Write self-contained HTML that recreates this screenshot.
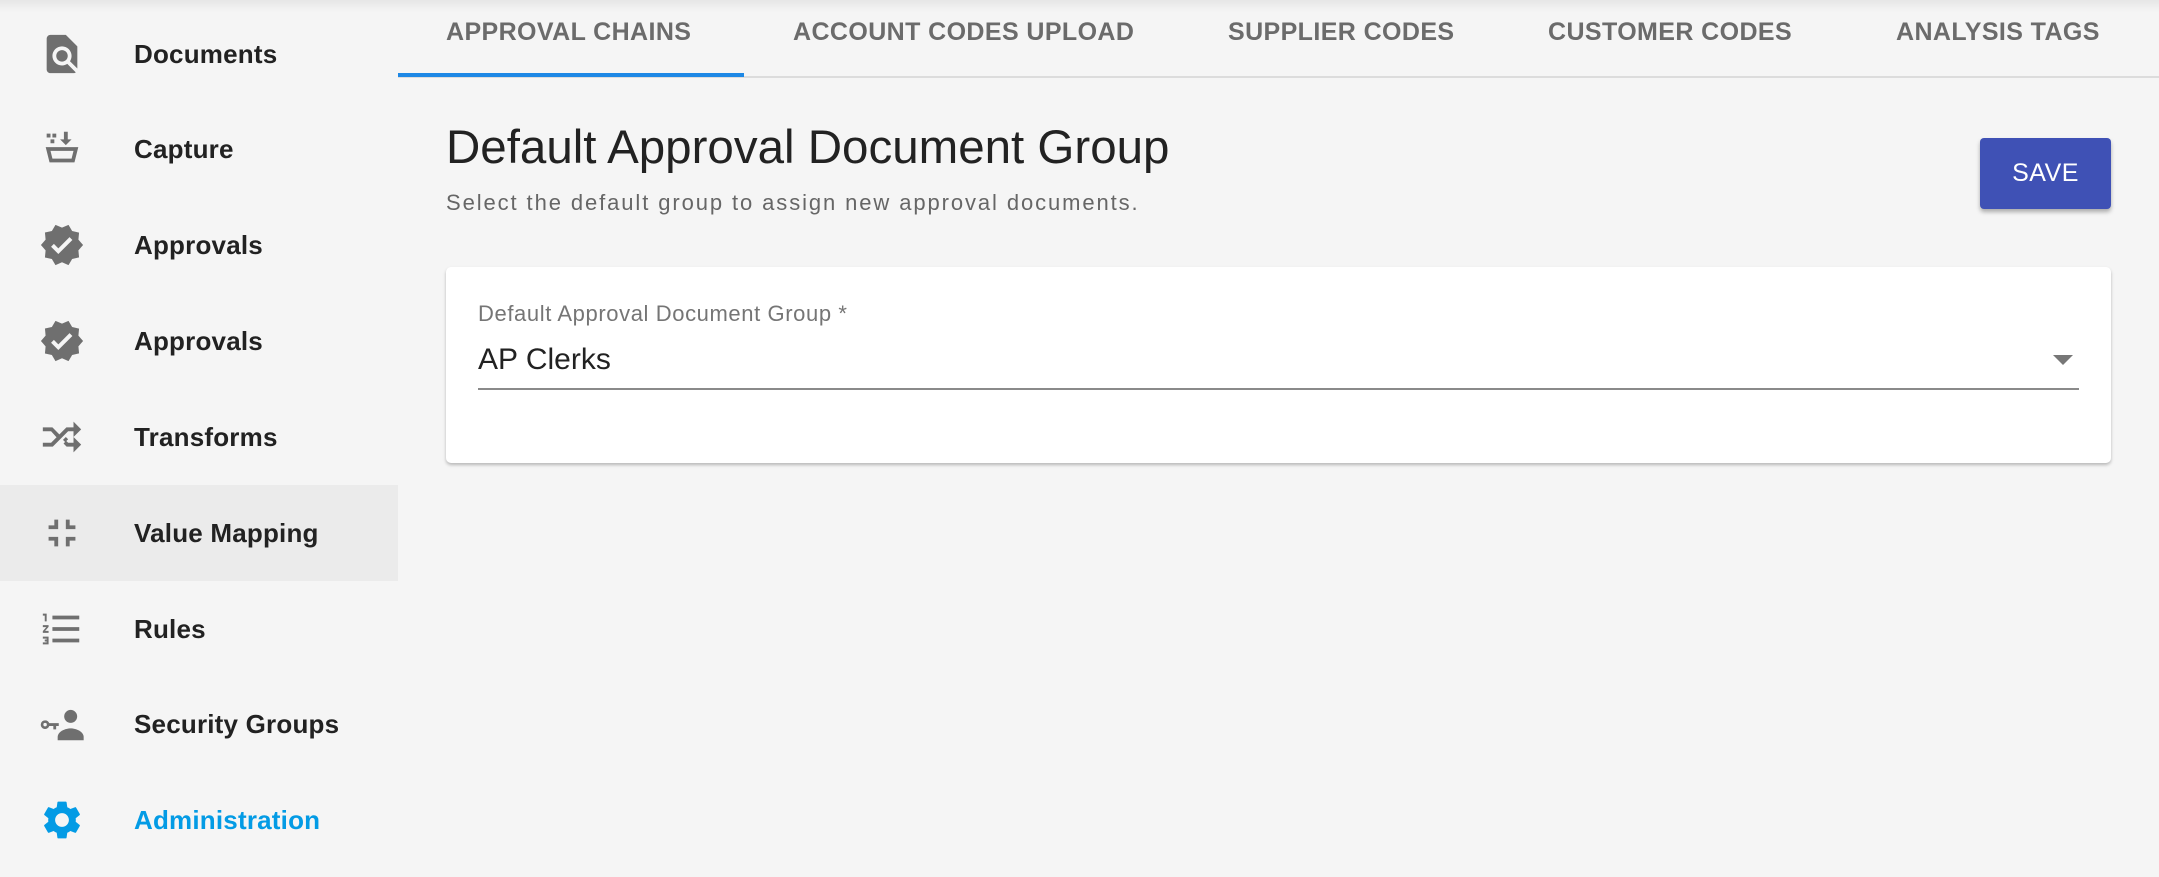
<!DOCTYPE html>
<html><head><meta charset="utf-8"><style>
*{margin:0;padding:0;box-sizing:border-box}
body{width:2159px;height:877px;background:#f5f5f5;font-family:"Liberation Sans",sans-serif;position:relative;overflow:hidden}
.top{position:absolute;left:0;top:0;width:2159px;height:12px;background:linear-gradient(#e6e6e6,#f5f5f5)}
.item{position:absolute;left:0;width:398px;height:96px}
.item svg{position:absolute;left:39px;top:25px;width:46px;height:46px;fill:#6f6f6f}
.item span{position:absolute;left:134px;top:0;line-height:96px;font-size:26px;font-weight:bold;color:#222;letter-spacing:0.2px}
.tab{position:absolute;top:18px;font-size:25px;color:#6b6b6b;font-weight:bold;letter-spacing:0.4px}
</style></head><body>
<div class="top"></div>
<div class="item" style="top:6px"><svg viewBox="0 0 24 24"><path d="M20 19.59V8l-6-6H6c-1.1 0-1.99.9-1.99 2L4 20c0 1.1.89 2 1.99 2H18c.45 0 .85-.15 1.19-.4l-4.430-4.43c-.8.52-1.74.83-2.76.83-2.76 0-5-2.24-5-5s2.24-5 5-5 5 2.24 5 5c0 1.02-.31 1.96-.83 2.77L20 19.59zM9 13c0 1.66 1.34 3 3 3s3-1.34 3-3-1.34-3-3-3-3 1.34-3 3z"/></svg><span>Documents</span></div>
<div class="item" style="top:101px"><svg viewBox="0 0 24 24"><path d="M4 4h2v2H4zM7 4h2v2H7zM6 7h2v2H6zM13 3h2v4h2l-3 3-3-3h2z"/><path d="M3.5 11h17l-2 8h-13zM6 13l1 4h10l1-4z" fill-rule="evenodd"/></svg><span>Capture</span></div>
<div class="item" style="top:197px"><svg viewBox="0 0 24 24"><path d="M23 12l-2.44-2.79.34-3.69-3.61-.82-1.89-3.2L12 2.96 8.6 1.5 6.71 4.69 3.1 5.5l.34 3.7L1 12l2.44 2.79-.34 3.7 3.61.82L8.6 22.5l3.4-1.47 3.4 1.46 1.89-3.19 3.61-.82-.34-3.69L23 12zm-12.91 4.72l-3.8-3.81 1.48-1.48 2.32 2.33 5.85-5.87 1.48 1.48-7.33 7.35z"/></svg><span>Approvals</span></div>
<div class="item" style="top:293px"><svg viewBox="0 0 24 24"><path d="M23 12l-2.44-2.79.34-3.69-3.61-.82-1.89-3.2L12 2.96 8.6 1.5 6.71 4.69 3.1 5.5l.34 3.7L1 12l2.44 2.79-.34 3.7 3.61.82L8.6 22.5l3.4-1.47 3.4 1.46 1.89-3.19 3.61-.82-.34-3.69L23 12zm-12.91 4.72l-3.8-3.81 1.48-1.48 2.32 2.33 5.85-5.87 1.48 1.48-7.33 7.35z"/></svg><span>Approvals</span></div>
<div class="item" style="top:389px"><svg viewBox="0 0 24 24"><path d="M2 7h5l4 4-1.5 1.5L6.3 9H2zM2 15h4.3l8-8H18V4l4 4-4 4V9h-2.8l-8 8H2zM12.5 13.5L14 12l1.2 1.2-1.5 1.5zM15.2 15H18v-3l4 4-4 4v-3h-3.6l-1.6-1.6 1.4-1.4z"/></svg><span>Transforms</span></div>
<div class="item" style="top:485px;background:#ebebeb"><svg viewBox="0 0 24 24"><path d="M5 16h3v3h2v-5H5v2zm3-8H5v2h5V5H8v3zm6 11h2v-3h3v-2h-5v5zm2-11V5h-2v5h5V8h-3z"/></svg><span>Value Mapping</span></div>
<div class="item" style="top:581px"><svg viewBox="0 0 24 24"><path d="M2 17h2v.5H3v1h1v.5H2v1h3v-4H2v1zm1-9h1V4H2v1h1v3zm-1 3h1.8L2 13.1v.9h3v-1H3.2L5 10.9V10H2v1zm5-6v2h14V5H7zm0 14h14v-2H7v2zm0-6h14v-2H7v2z"/></svg><span>Rules</span></div>
<div class="item" style="top:676px"><svg viewBox="0 0 24 24" style="left:36px;width:52px;height:52px;top:22px"><circle cx="16" cy="8.5" r="3"/><path d="M10 18c0-2.5 3.5-4 6-4s6 1.5 6 4v1.5H10z"/><path d="M4.2 10.3a2 2 0 1 0 1.9 2.6H8v1.6h1.3v-1.6h1.2v-1.3H6.1a2 2 0 0 0-1.9-1.3zm0 1.2a.8.8 0 1 1 0 1.6.8.8 0 0 1 0-1.6z" fill-rule="evenodd"/></svg><span>Security Groups</span></div>
<div class="item" style="top:772px"><svg viewBox="0 0 24 24" style="fill:#039be5"><path d="M19.14 12.94c.04-.3.06-.61.06-.94 0-.32-.02-.64-.07-.94l2.03-1.58c.18-.14.23-.41.12-.61l-1.92-3.32c-.12-.22-.37-.29-.59-.22l-2.39.96c-.5-.38-1.03-.7-1.62-.94l-.36-2.54c-.04-.24-.24-.41-.48-.41h-3.84c-.24 0-.43.17-.47.41l-.36 2.54c-.59.24-1.13.57-1.62.94l-2.39-.96c-.22-.08-.47 0-.59.22L2.74 8.87c-.12.21-.08.47.12.61l2.03 1.58c-.05.3-.09.63-.09.94s.02.64.07.94l-2.03 1.58c-.18.14-.23.41-.12.61l1.92 3.32c.12.22.37.29.59.22l2.39-.96c.5.38 1.03.7 1.62.94l.36 2.54c.05.24.24.41.48.41h3.84c.24 0 .44-.17.47-.41l.36-2.54c.59-.24 1.13-.56 1.62-.94l2.39.96c.22.08.47 0 .59-.22l1.92-3.32c.12-.22.07-.47-.12-.61l-2.01-1.58zM12 15.6c-1.98 0-3.6-1.62-3.6-3.6s1.62-3.6 3.6-3.6 3.6 1.62 3.6 3.6-1.62 3.6-3.6 3.6z"/></svg><span style="color:#039be5">Administration</span></div>

<div style="position:absolute;left:398px;top:76px;width:1761px;height:2px;background:#dcdcdc"></div>
<div style="position:absolute;left:398px;top:73px;width:346px;height:4px;background:#1e88e5"></div>
<div class="tab" style="left:446px">APPROVAL CHAINS</div>
<div class="tab" style="left:793px">ACCOUNT CODES UPLOAD</div>
<div class="tab" style="left:1228px">SUPPLIER CODES</div>
<div class="tab" style="left:1548px">CUSTOMER CODES</div>
<div class="tab" style="left:1896px">ANALYSIS TAGS</div>

<div style="position:absolute;left:446px;top:120px;font-size:47.5px;color:#222">Default Approval Document Group</div>
<div style="position:absolute;left:446px;top:190px;font-size:22px;color:#666;letter-spacing:1.9px">Select the default group to assign new approval documents.</div>
<div style="position:absolute;left:1980px;top:138px;width:131px;height:71px;background:#3f51b5;border-radius:4px;box-shadow:0 3px 4px rgba(0,0,0,.3);color:#fff;font-size:25px;text-align:center;line-height:71px;letter-spacing:0.5px">SAVE</div>

<div style="position:absolute;left:446px;top:267px;width:1665px;height:196px;background:#fff;border-radius:5px;box-shadow:0 2px 3px rgba(0,0,0,.25)">
<div style="position:absolute;left:32px;top:34px;font-size:22px;color:#757575;letter-spacing:0.6px">Default Approval Document Group *</div>
<div style="position:absolute;left:32px;top:76px;font-size:30px;color:#222">AP Clerks</div>
<div style="position:absolute;right:38px;top:88px;width:0;height:0;border-left:10px solid transparent;border-right:10px solid transparent;border-top:10px solid #777"></div>
<div style="position:absolute;left:32px;top:121px;width:1601px;height:2px;background:#8a8a8a"></div>
</div>
</body></html>
